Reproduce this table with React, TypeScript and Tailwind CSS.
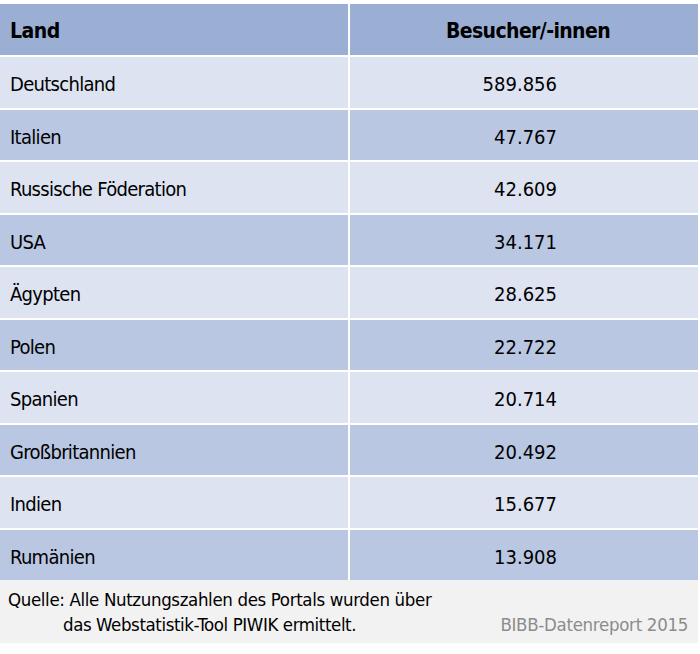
const rows: [string, string][] = [
  ["Deutschland", "589.856"],
  ["Italien", "47.767"],
  ["Russische Föderation", "42.609"],
  ["USA", "34.171"],
  ["Ägypten", "28.625"],
  ["Polen", "22.722"],
  ["Spanien", "20.714"],
  ["Großbritannien", "20.492"],
  ["Indien", "15.677"],
  ["Rumänien", "13.908"],
];

const font = { fontFamily: '"DejaVu Sans Condensed", "DejaVu Sans", sans-serif' };

export default function App() {
  return (
    <div className="w-[700px] h-[654px] bg-white pt-[4px]" style={font}>
      <div className="w-[698px] flex flex-col gap-[2px]">
        <div className="grid grid-cols-[348px_348px] gap-x-[2px] h-[51px]">
          <div className="bg-[#9aafd3] flex items-center pl-[10px] pt-[4px] text-[21px] font-bold text-black tracking-[-0.5px]">
            Land
          </div>
          <div className="bg-[#9aafd3] flex items-center justify-center pt-[4px] pl-[8px] text-[21px] font-bold text-black tracking-[-0.6px]">
            Besucher/-innen
          </div>
        </div>
        {rows.map(([land, count], i) => {
          const bg = i % 2 === 0 ? "bg-[#dde3f1]" : "bg-[#b9c7e2]";
          return (
            <div key={land} className="grid grid-cols-[348px_348px] gap-x-[2px] h-[50.5px]">
              <div className={`${bg} flex items-center pl-[10px] pt-[4px] text-[20px] text-black tracking-[-0.7px]`}>
                {land}
              </div>
              <div className={`${bg} flex items-center justify-end pr-[141px] pt-[4px] text-[20px] text-black tracking-[0px]`}>
                {count}
              </div>
            </div>
          );
        })}
        <div className="bg-[#f2f2f2] h-[63px] flex justify-between items-end px-[8px] pb-[6px] -mt-[2px]">
          <div className="text-[18.5px] leading-[25px] text-black">
            <div className="tracking-[-0.35px]">Quelle: Alle Nutzungszahlen des Portals wurden über</div>
            <div className="pl-[55px] tracking-[-0.4px]">das Webstatistik-Tool PIWIK ermittelt.</div>
          </div>
          <div className="text-[18.5px] leading-[25px] text-[#8c8c8c] tracking-[-0.3px] pr-[2px]">
            BIBB-Datenreport 2015
          </div>
        </div>
      </div>
    </div>
  );
}
